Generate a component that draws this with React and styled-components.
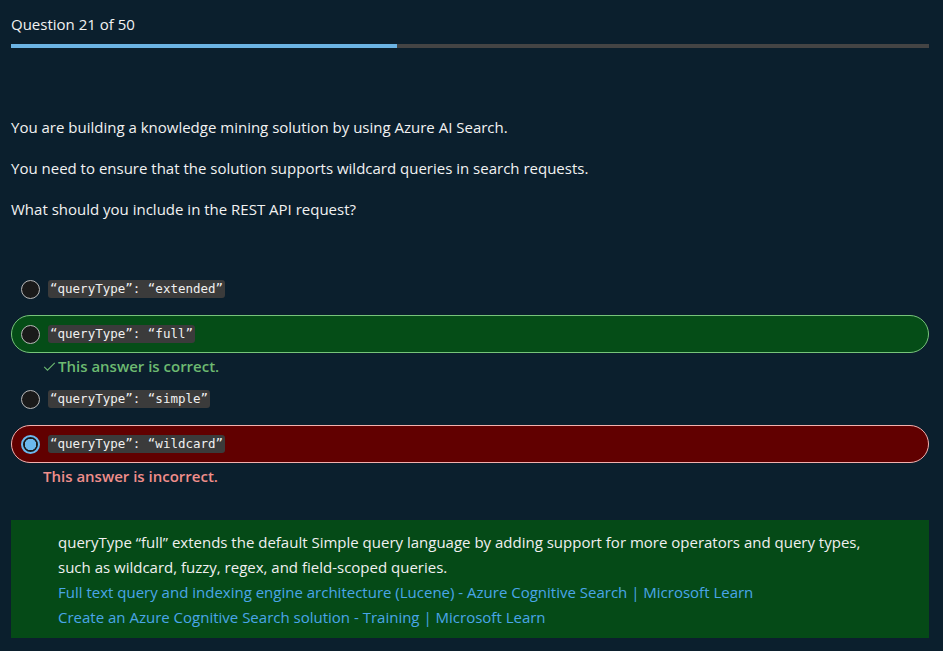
import React from "react";
import styled, { createGlobalStyle } from "styled-components";

const GlobalStyle = createGlobalStyle`
  html, body {
    margin: 0;
    background: #0b1f2d;
  }
  body {
    font-family: "Open Sans", "Noto Sans", sans-serif;
    color: #f2f2f2;
    font-size: 15px;
  }
`;

const options = [
  { id: 1, text: "“queryType”: “extended”" },
  { id: 2, text: "“queryType”: “full”", status: "correct" },
  { id: 3, text: "“queryType”: “simple”" },
  { id: 4, text: "“queryType”: “wildcard”", status: "incorrect", selected: true },
];

const App = () => {
  const current = 21;
  const total = 50;

  return (
    <>
      <GlobalStyle />
      <StPage>
        <StHeader>
          Question {current} of {total}
        </StHeader>
        <StTrack>
          <StFill style={{ width: `${(current / total) * 100}%` }} />
        </StTrack>

        <StQuestion>
          <p>You are building a knowledge mining solution by using Azure AI Search.</p>
          <p>You need to ensure that the solution supports wildcard queries in search requests.</p>
          <p>What should you include in the REST API request?</p>
        </StQuestion>

        <StOptions>
          {options.map((opt) => (
            <StItem key={opt.id}>
              <StOption status={opt.status}>
                <StRadio selected={opt.selected} />
                <StCode>{opt.text}</StCode>
              </StOption>
              {opt.status === "correct" && (
                <StFeedback status="correct">
                  <StCheck viewBox="0 0 16 16">
                    <path d="M1.5 8.5 L5.5 12.5 L14.5 3.5" />
                  </StCheck>
                  This answer is correct.
                </StFeedback>
              )}
              {opt.status === "incorrect" && (
                <StFeedback status="incorrect">This answer is incorrect.</StFeedback>
              )}
            </StItem>
          ))}
        </StOptions>

        <StExplain>
          <div>
            queryType “full” extends the default Simple query language by adding support for more
            operators and query types, such as wildcard, fuzzy, regex, and field-scoped queries.
          </div>
          <StLink href="#">
            Full text query and indexing engine architecture (Lucene) - Azure Cognitive Search |
            Microsoft Learn
          </StLink>
          <StLink href="#">Create an Azure Cognitive Search solution - Training | Microsoft Learn</StLink>
        </StExplain>
      </StPage>
    </>
  );
};

export default App;

const StPage = styled.div`
  padding: 0 14px 12px 11px;
`;

const StHeader = styled.div`
  padding-top: 14px;
  line-height: 20px;
`;

const StTrack = styled.div`
  margin-top: 10px;
  height: 4px;
  background: #444444;
`;

const StFill = styled.div`
  height: 100%;
  background: #6cb4e4;
`;

const StQuestion = styled.div`
  margin-top: 68px;
  line-height: 22px;

  p {
    margin: 0 0 19px;
  }
  p:last-child {
    margin-bottom: 0;
  }
`;

const StOptions = styled.div`
  margin-top: 50px;
  display: flex;
  flex-direction: column;
  gap: 7px;
`;

const StItem = styled.div`
  display: flex;
  flex-direction: column;
`;

const StOption = styled.div`
  box-sizing: border-box;
  height: 38px;
  display: flex;
  align-items: center;
  gap: 8px;
  padding-left: 9px;
  border-radius: 19px;
  border: 1px solid
    ${({ status }) =>
      status === "correct" ? "#77c47a" : status === "incorrect" ? "#f3b0ae" : "transparent"};
  background: ${({ status }) =>
    status === "correct" ? "#054d17" : status === "incorrect" ? "#610000" : "transparent"};
`;

const StRadio = styled.span`
  box-sizing: border-box;
  width: 19px;
  height: 19px;
  border-radius: 50%;
  flex-shrink: 0;
  border: ${({ selected }) => (selected ? "2px solid #6cb8ee" : "1px solid #b8b8b8")};
  background: ${({ selected }) =>
    selected ? "radial-gradient(circle, #6cb8ee 0 5.5px, #1a1a1a 6px)" : "#1a1a1a"};
`;

const StCode = styled.code`
  font-family: "DejaVu Sans Mono", "Liberation Mono", monospace;
  font-size: 12.5px;
  line-height: 18px;
  padding: 0 2px;
  background: #3b3b3b;
  border-radius: 3px;
  color: #f0f0f0;
`;

const StFeedback = styled.div`
  display: flex;
  align-items: center;
  gap: 2px;
  padding-left: 32px;
  margin: 3px 0 -3px;
  line-height: 20px;
  font-weight: 600;
  color: ${({ status }) => (status === "correct" ? "#6dba71" : "#f08e8b")};
`;

const StCheck = styled.svg`
  width: 13px;
  height: 13px;
  fill: none;
  stroke: #6dba71;
  stroke-width: 1.3;
`;

const StExplain = styled.div`
  margin-top: 37px;
  background: #054a17;
  padding: 10px 45px 8px 47px;
  line-height: 25px;
  color: #f0f0f0;
`;

const StLink = styled.a`
  display: block;
  color: #4aa6e8;
  text-decoration: none;
`;
